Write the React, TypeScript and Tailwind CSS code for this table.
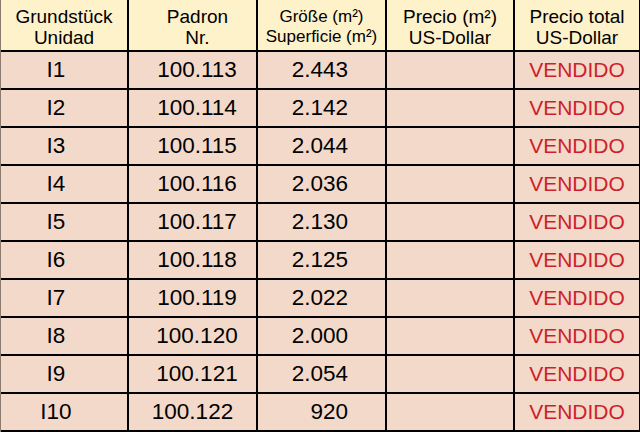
const rows = [
  { lot: 'I1', padron: '100.113', size: '2.443', off: 'pl-[9px]' },
  { lot: 'I2', padron: '100.114', size: '2.142', off: 'pl-[9px]' },
  { lot: 'I3', padron: '100.115', size: '2.044', off: 'pl-[9px]' },
  { lot: 'I4', padron: '100.116', size: '2.036', off: 'pl-[9px]' },
  { lot: 'I5', padron: '100.117', size: '2.130', off: 'pl-[9px]' },
  { lot: 'I6', padron: '100.118', size: '2.125', off: 'pl-[9px]' },
  { lot: 'I7', padron: '100.119', size: '2.022', off: 'pl-[9px]' },
  { lot: 'I8', padron: '100.120', size: '2.000', off: 'pl-[9px]' },
  { lot: 'I9', padron: '100.121', size: '2.054', off: 'pl-[9px]' },
  { lot: 'I10', padron: '100.122', size: '920', off: 'pl-0' },
];

export default function App() {
  const cell = 'border-r-2 border-b-2 border-black flex items-center';
  const head = `${cell} bg-[#fef2cb] justify-center text-center text-black pt-1`;
  const big = 'text-[19px] leading-[21px]';
  const body = `${cell} bg-[#f3d9ca] h-[38px]`;
  const num = 'text-[22.5px] text-black';

  return (
    <div
      className="w-[640px] h-[432px] overflow-hidden bg-white"
      style={{ fontFamily: '"Liberation Sans", Arial, sans-serif' }}
    >
      <div className="grid grid-cols-[128px_129px_129px_128px_126px] border-l border-[#8a7a70]">
        {/* Kopfzeile */}
        <div className={`${head} ${big} h-[52px]`}>
          Grundstück
          <br />
          Unidad
        </div>
        <div className={`${head} ${big} pl-[10px]`}>
          Padron
          <br />
          Nr.
        </div>
        <div className={`${head} text-[17px] leading-[20px]`}>
          Größe (m²)
          <br />
          Superficie (m²)
        </div>
        <div className={`${head} ${big}`}>
          Precio (m²)
          <br />
          US-Dollar
        </div>
        <div className={`${head} ${big}`}>
          Precio total
          <br />
          US-Dollar
        </div>

        {rows.map((r) => (
          <div key={r.lot} className="contents">
            <div className={`${body} ${num} justify-center pr-4`}>{r.lot}</div>
            <div className={`${body} ${num} justify-center ${r.off}`}>{r.padron}</div>
            <div className={`${body} ${num} justify-end pr-[37px]`}>{r.size}</div>
            <div className={body}></div>
            <div className={`${body} justify-center text-[21px] text-[#cc1f2b]`}>VENDIDO</div>
          </div>
        ))}
      </div>
    </div>
  );
}
